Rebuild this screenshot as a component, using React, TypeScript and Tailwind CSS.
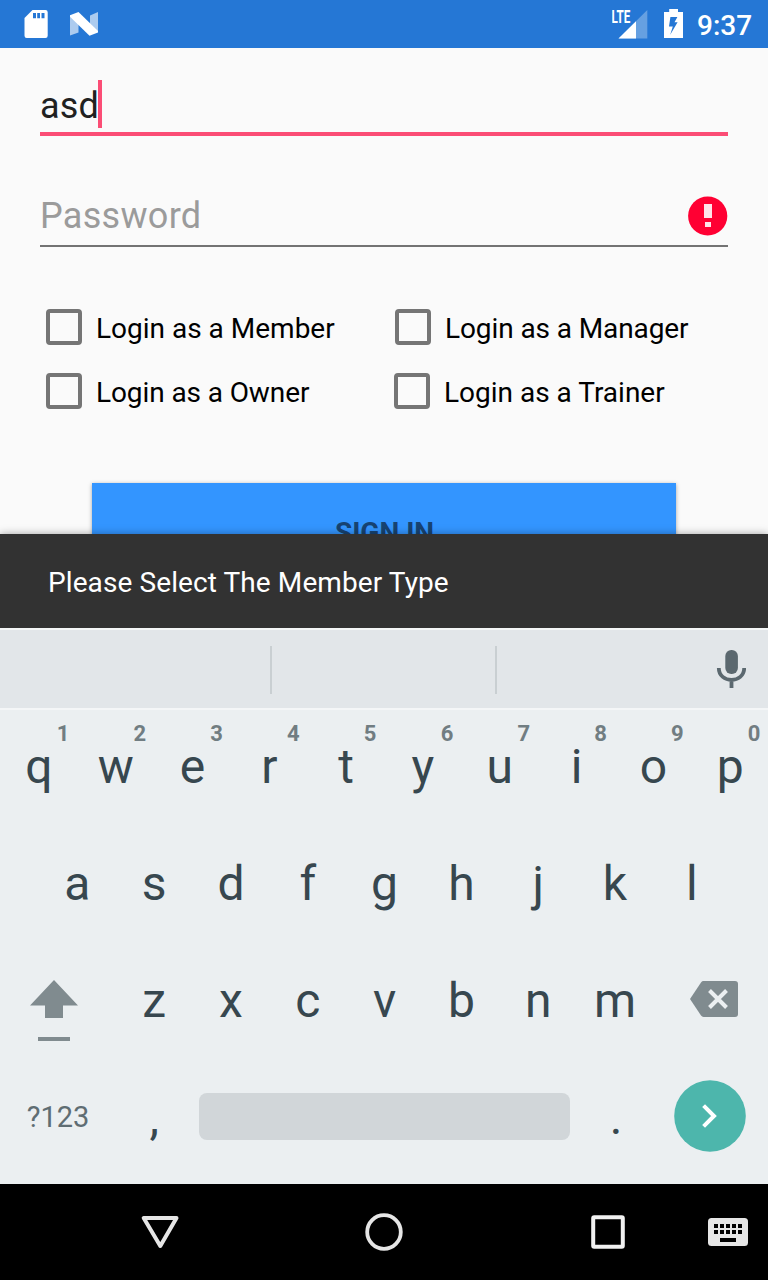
import React from "react";

function StatusBar() {
  return (
    <header className="flex h-12 items-center bg-[#2577d5] text-white">
      <svg className="ml-6 h-12 w-6" viewBox="0 0 24 48" fill="currentColor">
        <path
          fillRule="evenodd"
          d="M8.5 10H21.5a2.2 2.2 0 0 1 2.2 2.2V35.8a2.2 2.2 0 0 1-2.2 2.2H2.7A2.2 2.2 0 0 1 .5 35.8V18ZM9 13v5.2h3V13ZM13.2 13v5.2h2.8V13ZM17.5 13v5.2h3V13Z"
        />
      </svg>
      <svg className="ml-[22px] h-12 w-7" viewBox="0 0 28 48" fill="currentColor">
        <path opacity=".62" d="M0 15.5L8.5 22V32.4L0 35.5ZM28 12V32L20 25V15.5Z" />
        <path d="M0 15.2L8.5 12L28 31V32.5L19.5 35.7L0 16.8Z" />
      </svg>
      <div className="ml-auto flex h-12 items-center">
        <svg className="h-12 w-9" viewBox="0 0 36 48" fill="currentColor">
          <path opacity=".3" d="M35.3 10V38.5H6.5Z" />
          <path d="M24 21.2V38.5H6.5Z" />
          <text
            x="-0.5"
            y="22.6"
            fontFamily="Roboto"
            fontSize="17.5"
            fontWeight="700"
            textLength="18.8"
            lengthAdjust="spacingAndGlyphs"
          >
            LTE
          </text>
        </svg>
        <svg className="ml-4 h-12 w-5" viewBox="0 0 20 48" fill="currentColor">
          <path
            fillRule="evenodd"
            d="M5.2 9H14V12H19V38H0V12H5.2ZM6.4 17L5 26.6H8.8L6.2 34.7L13.6 22.3H10.5L13.4 17Z"
          />
        </svg>
        <span className="ml-[13px] mr-4 mt-[3px] w-[55px] text-[28px] leading-[48px] font-medium">9:37</span>
      </div>
    </header>
  );
}

function CheckOption({ label, inset }: { label: string; inset: string }) {
  return (
    <label className={`flex h-16 items-center ${inset}`}>
      <span className="h-9 w-9 shrink-0 rounded-[4px] border-4 border-[#757575]" />
      <span className="ml-3.5 mt-[3px] text-[28px] leading-8 whitespace-nowrap text-black">{label}</span>
    </label>
  );
}

function LoginForm() {
  return (
    <main className="h-[486px] overflow-hidden bg-[#fafafa] px-10 pt-8">
      <div className="flex h-14 items-start border-b-4 border-[#fb4d75] text-[36px] leading-[52px] text-[#212121]">
        <span className="w-[58px] tracking-[0.2px]">asd</span>
        <span className="h-12 w-1 bg-[#fb4d75]" />
      </div>
      <div className="mt-[49px] flex h-[62px] items-center justify-between border-b-2 border-[#737373] pt-0.5 text-[36px] text-[#9b9b9b]">
        <span className="leading-[58px] tracking-[0.3px]">Password</span>
        <svg className="h-10 w-10" viewBox="0 0 40 40">
          <circle cx="19.7" cy="20" r="19.6" fill="#ff0033" />
          <path d="M16 8H24V22H16ZM17 26H23V31H17Z" fill="#ffe3e9" />
        </svg>
      </div>
      <div className="mt-12 grid grid-cols-[348px_1fr]">
        <CheckOption label="Login as a Member" inset="pl-1.5" />
        <CheckOption label="Login as a Manager" inset="pl-[7px] tracking-[-0.1px]" />
        <CheckOption label="Login as a Owner" inset="pl-1.5 tracking-[-0.1px]" />
        <CheckOption label="Login as a Trainer" inset="pl-1.5" />
      </div>
      <button className="mx-[52px] mt-[60px] block h-24 w-[584px] bg-[#3395ff] pt-1 pl-px text-[28px] leading-8 font-bold text-[#174372] shadow-[0_1px_4px_rgba(0,0,0,0.35)]">
        SIGN IN
      </button>
    </main>
  );
}

function Snackbar() {
  return (
    <div className="relative h-[94px] bg-[#323232] pt-0.5 pl-12 text-[28px] leading-[94px] tracking-[0.1px] text-white shadow-[0_0_8px_rgba(0,0,0,0.35)]">
      Please Select The Member Type
    </div>
  );
}

function SuggestionStrip() {
  return (
    <div className="relative flex h-[82px] items-center border-y-2 border-[#f4f6f7] bg-[#e2e6e9]">
      <span className="mt-0.5 ml-[270px] h-12 w-0.5 bg-[#c9cfd2]" />
      <span className="mt-0.5 ml-[223px] h-12 w-0.5 bg-[#c9cfd2]" />
      <svg className="mr-[22px] ml-auto h-10 w-[30px]" viewBox="0 0 30 40">
        <rect x="9.3" y="1" width="12.6" height="24" rx="6" fill="#5b686f" />
        <path d="M2.8 19C2.8 34.8 28.2 34.8 28.2 19M15.5 31V39" fill="none" stroke="#5b686f" strokeWidth="3.8" />
      </svg>
    </div>
  );
}

function Key({ letter, hint }: { letter: string; hint?: string }) {
  return (
    <div className="relative flex w-[76.8px] items-center justify-center pl-[1.2px] text-[48px] leading-[56px]">
      {letter}
      {hint && (
        <span className="absolute top-3 right-[7.5px] text-[22px] leading-6 font-bold text-[#717d82]">{hint}</span>
      )}
    </div>
  );
}

function Keyboard() {
  return (
    <section className="h-[474px] bg-[#ebeff1] text-[#37474f]">
      <div className="mb-0.5 flex h-[113px]">
        {"qwertyuiop".split("").map((c, i) => (
          <Key key={c} letter={c} hint={String((i + 1) % 10)} />
        ))}
      </div>
      <div className="flex h-[117px] justify-center">
        {"asdfghjkl".split("").map((c) => (
          <Key key={c} letter={c} />
        ))}
      </div>
      <div className="flex h-[117px]">
        <div className="flex w-[115.2px] items-center pl-[30px]">
          <svg className="mt-[18px] h-16 w-12" viewBox="0 0 48 64" fill="#808b8f">
            <path d="M24 2L48 27.6H33V40H15V27.6H0ZM8 59H40V63H8Z" />
          </svg>
        </div>
        {"zxcvbnm".split("").map((c) => (
          <Key key={c} letter={c} />
        ))}
        <div className="flex w-[115.2px] items-center justify-end pr-[30px]">
          <svg className="mb-1 h-9 w-12" viewBox="0 0 48 36">
            <path d="M13.5 0H45a3 3 0 0 1 3 3V33a3 3 0 0 1-3 3H13.5Q12 36 11 34.6L0 18L11 1.4Q12 0 13.5 0Z" fill="#808b8f" />
            <path d="M19.5 9.5L36.5 26.5M36.5 9.5L19.5 26.5" stroke="#ebeff1" strokeWidth="4" />
          </svg>
        </div>
      </div>
      <div className="flex h-[117px] items-center">
        <span className="mb-0.5 w-[115.2px] pl-[26.8px] text-[29px] leading-8 text-[#5f6d73]">?123</span>
        <Key letter="," />
        <span className="mr-[7px] mb-0.5 ml-[7px] h-[47px] w-[371px] rounded-lg bg-[#d1d6d9]" />
        <Key letter="." />
        <svg className="mr-[22px] mb-[3px] ml-auto h-[72px] w-[72px]" viewBox="0 0 72 72">
          <circle cx="36" cy="36" r="35.8" fill="#4db6ac" />
          <path d="M29.6 25.6L40 36L29.6 46.4" fill="none" stroke="#fff" strokeWidth="4" />
        </svg>
      </div>
    </section>
  );
}

function NavigationBar() {
  return (
    <nav className="flex h-24 items-center bg-black">
      <svg className="ml-[140px] h-10 w-10" viewBox="0 0 40 40">
        <path d="M3.7 6H36.5L20.3 34Z" fill="none" stroke="#e6e6e6" strokeWidth="4" strokeLinejoin="round" />
      </svg>
      <svg className="ml-[184px] h-10 w-10" viewBox="0 0 40 40">
        <circle cx="20" cy="20" r="16.8" fill="none" stroke="#e6e6e6" strokeWidth="3.8" />
      </svg>
      <svg className="ml-[184px] h-10 w-10" viewBox="0 0 40 40">
        <rect x="5.2" y="5.2" width="29.6" height="29.6" rx="1" fill="none" stroke="#f2f2f2" strokeWidth="4" />
      </svg>
      <svg className="ml-20 h-7 w-10" viewBox="0 0 40 28">
        <rect width="40" height="28" rx="3.5" fill="#e6e6e6" />
        <path d="M6 8H34M6 14H34" stroke="#000" strokeWidth="4" strokeDasharray="4 2" />
        <path d="M12 20H28V24H12Z" />
      </svg>
    </nav>
  );
}

export default function App() {
  return (
    <div className="h-[1280px] w-[768px] overflow-hidden font-[Roboto,sans-serif]">
      <StatusBar />
      <LoginForm />
      <Snackbar />
      <SuggestionStrip />
      <Keyboard />
      <NavigationBar />
    </div>
  );
}
